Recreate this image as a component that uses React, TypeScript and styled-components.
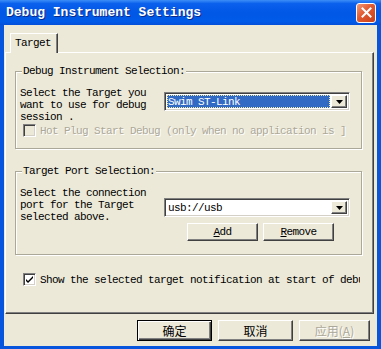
import React from 'react';
import styled, { createGlobalStyle } from 'styled-components';

const MONO = `"Liberation Mono", "DejaVu Sans Mono", monospace`;
const CJK = `"Noto Sans CJK SC", "Noto Sans", sans-serif`;
const FACE = '#ECE9D8';

const GlobalStyle = createGlobalStyle`
  html, body {
    margin: 0;
    padding: 0;
    background: #ffffff;
  }
  body {
    font-family: ${MONO};
  }
`;

const Window = styled.div`
  width: 381px;
  height: 349px;
  display: flex;
  flex-direction: column;
  background: #0855dd;
  overflow: hidden;
`;

const TitleBar = styled.div`
  height: 25px;
  flex: none;
  display: flex;
  align-items: center;
  justify-content: space-between;
  padding: 0 5px 0 6px;
  background: linear-gradient(
    to bottom,
    #3d8ef8 0%,
    #0b61ec 14%,
    #0157e6 50%,
    #015be9 86%,
    #0450d8 100%
  );
`;

const Title = styled.span`
  font-family: ${MONO};
  font-size: 13px;
  font-weight: bold;
  color: #ffffff;
  text-shadow: 1px 1px 0 #0a2a8a;
  white-space: nowrap;
`;

const CloseButton = styled.div`
  width: 20px;
  height: 20px;
  box-sizing: border-box;
  border: 1px solid #ffffff;
  border-radius: 3px;
  background: linear-gradient(135deg, #f09a7a 0%, #e1592f 45%, #c8401a 100%);
  display: flex;
  align-items: center;
  justify-content: center;
`;

const Frame = styled.div`
  flex: 1;
  min-height: 0;
  display: flex;
  padding: 0 4px 3px 4px;
`;

const Client = styled.div`
  flex: 1;
  min-width: 0;
  display: flex;
  flex-direction: column;
  background: ${FACE};
  padding: 8px 3px 5px 1px;
`;

const TabStrip = styled.div`
  display: flex;
  padding-left: 5px;
`;

const Tab = styled.div`
  position: relative;
  z-index: 1;
  height: 20px;
  box-sizing: border-box;
  margin-bottom: -1px;
  padding: 0 6px 0 4px;
  background: ${FACE};
  border-top: 1px solid #ffffff;
  border-left: 1px solid #ffffff;
  border-right: 1px solid #404040;
  box-shadow: inset -1px 0 0 #808080;
  font-size: 11px;
  letter-spacing: -0.6px;
  line-height: 18px;
  color: #000000;
`;

const TabPanel = styled.div`
  flex: 1;
  min-width: 0;
  display: flex;
  flex-direction: column;
  border-top: 1px solid #ffffff;
  border-left: 1px solid #ffffff;
  border-right: 1px solid #404040;
  border-bottom: 1px solid #404040;
  box-shadow: inset -1px -1px 0 #808080;
`;

const GroupBox = styled.fieldset<{ $top: number; $bottom: number }>`
  margin: ${(p) => p.$top}px 11px 0 9px;
  padding: 10px 10px ${(p) => p.$bottom}px 4px;
  border: 1px solid #aca899;
  box-shadow: 1px 1px 0 #ffffff, inset 1px 1px 0 #ffffff;
  min-width: 0;
`;

const Caption = styled.legend`
  margin-left: 2px;
  padding: 0 1px;
  background: ${FACE};
  font-size: 11px;
  letter-spacing: -0.6px;
  line-height: 12px;
  color: #000000;
`;

const Row = styled.div`
  display: flex;
  align-items: flex-start;
`;

const Text = styled.div`
  width: 144px;
  flex: none;
  font-size: 11px;
  letter-spacing: -0.6px;
  line-height: 12px;
  color: #000000;
`;

const Combo = styled.div<{ $top: number }>`
  width: 186px;
  height: 19px;
  box-sizing: border-box;
  margin-top: ${(p) => p.$top}px;
  display: flex;
  background: #ffffff;
  border: 1px solid;
  border-color: #808080 #ffffff #ffffff #808080;
  box-shadow: inset 1px 1px 0 #404040, inset -1px -1px 0 #d4d0c8;
  padding: 2px;
`;

const ComboValue = styled.div<{ $selected?: boolean }>`
  flex: 1;
  min-width: 0;
  margin-right: 1px;
  padding-left: 1px;
  display: flex;
  align-items: center;
  font-size: 11px;
  letter-spacing: -0.6px;
  white-space: nowrap;
  overflow: hidden;
  color: ${(p) => (p.$selected ? '#ffffff' : '#000000')};
  background: ${(p) => (p.$selected ? '#316ac5' : 'transparent')};
  outline: ${(p) => (p.$selected ? '1px dotted #f4e9a0' : 'none')};
  outline-offset: -1px;
`;

const DropButton = styled.div`
  width: 16px;
  flex: none;
  box-sizing: border-box;
  background: ${FACE};
  border: 1px solid;
  border-color: #ffffff #404040 #404040 #ffffff;
  box-shadow: inset -1px -1px 0 #808080;
  display: flex;
  align-items: center;
  justify-content: center;
`;

const CheckRow = styled.div<{ $top: number; $left: number; $right?: number }>`
  display: flex;
  align-items: center;
  height: 15px;
  min-width: 0;
  margin: ${(p) => p.$top}px ${(p) => p.$right ?? 0}px 0 ${(p) => p.$left}px;
  overflow: hidden;
`;

const CheckBox = styled.div<{ $disabled?: boolean }>`
  width: 13px;
  height: 13px;
  flex: none;
  box-sizing: border-box;
  border: 1px solid;
  border-color: #808080 #ffffff #ffffff #808080;
  box-shadow: inset 1px 1px 0 #404040, inset -1px -1px 0 #d4d0c8;
  background: ${(p) => (p.$disabled ? FACE : '#ffffff')};
  display: flex;
  align-items: center;
  justify-content: center;
`;

const CheckLabel = styled.span<{ $disabled?: boolean }>`
  flex: 1 1 auto;
  min-width: 0;
  overflow: hidden;
  margin-left: 4px;
  font-size: 11px;
  letter-spacing: -0.6px;
  line-height: 12px;
  white-space: nowrap;
  color: ${(p) => (p.$disabled ? '#aca899' : '#000000')};
  text-shadow: ${(p) => (p.$disabled ? '1px 1px 0 #ffffff' : 'none')};
`;

const ButtonRow = styled.div<{ $gap: number; $right: number; $top: number }>`
  display: flex;
  justify-content: flex-end;
  gap: ${(p) => p.$gap}px;
  margin-top: ${(p) => p.$top}px;
  padding-right: ${(p) => p.$right}px;
`;

const Button = styled.div<{ $w: number; $h: number; $default?: boolean; $disabled?: boolean; $cjk?: boolean }>`
  width: ${(p) => p.$w}px;
  height: ${(p) => p.$h}px;
  flex: none;
  box-sizing: border-box;
  display: flex;
  align-items: center;
  justify-content: center;
  background: ${FACE};
  border: 1px solid;
  border-color: ${(p) => (p.$default ? '#000000' : '#ffffff #404040 #404040 #ffffff')};
  box-shadow: ${(p) =>
    p.$default
      ? 'inset 1px 1px 0 #ffffff, inset -1px -1px 0 #404040, inset -2px -2px 0 #808080'
      : 'inset -1px -1px 0 #808080'};
  font-family: ${(p) => (p.$cjk ? CJK : MONO)};
  font-size: ${(p) => (p.$cjk ? '12px' : '11px')};
  letter-spacing: ${(p) => (p.$cjk ? '0' : '-0.6px')};
  color: ${(p) => (p.$disabled ? '#aca899' : '#000000')};
  text-shadow: ${(p) => (p.$disabled ? '1px 1px 0 #ffffff' : 'none')};
`;

const Arrow = () => (
  <svg width="7" height="4" viewBox="0 0 7 4">
    <path d="M0 0h7L3.5 4z" fill="#000" />
  </svg>
);

const Tick = () => (
  <svg width="9" height="9" viewBox="0 0 9 9">
    <path d="M1 4l2 2 5-5v2L3 8 1 6z" fill="#000" />
  </svg>
);

const App: React.FC = () => {
  return (
    <>
      <GlobalStyle />
      <Window>
        <TitleBar>
          <Title>Debug Instrument Settings</Title>
          <CloseButton>
            <svg width="11" height="11" viewBox="0 0 11 11">
              <path d="M1.5 1.5l8 8M9.5 1.5l-8 8" stroke="#fff" strokeWidth="2" strokeLinecap="square" />
            </svg>
          </CloseButton>
        </TitleBar>
        <Frame>
          <Client>
            <TabStrip>
              <Tab>Target</Tab>
            </TabStrip>
            <TabPanel>
              <GroupBox $top={12} $bottom={10}>
                <Caption>Debug Instrument Selection:</Caption>
                <Row>
                  <Text>Select the Target you want to use for debug session .</Text>
                  <Combo $top={5}>
                    <ComboValue $selected>Swim ST-Link</ComboValue>
                    <DropButton>
                      <Arrow />
                    </DropButton>
                  </Combo>
                </Row>
                <CheckRow $top={0} $left={3}>
                  <CheckBox $disabled />
                  <CheckLabel $disabled>Hot Plug Start Debug (only when no application is ]</CheckLabel>
                </CheckRow>
              </GroupBox>

              <GroupBox $top={16} $bottom={13}>
                <Caption>Target Port Selection:</Caption>
                <Row>
                  <Text>Select the connection port for the Target selected above.</Text>
                  <Combo $top={11}>
                    <ComboValue>usb://usb</ComboValue>
                    <DropButton>
                      <Arrow />
                    </DropButton>
                  </Combo>
                </Row>
                <ButtonRow $gap={5} $right={17} $top={0}>
                  <Button $w={71} $h={18}>
                    <u>A</u>dd
                  </Button>
                  <Button $w={71} $h={18}>
                    <u>R</u>emove
                  </Button>
                </ButtonRow>
              </GroupBox>

              <CheckRow $top={17} $left={17} $right={13}>
                <CheckBox>
                  <Tick />
                </CheckBox>
                <CheckLabel>Show the selected target notification at start of debug</CheckLabel>
              </CheckRow>
            </TabPanel>
            <ButtonRow $gap={6} $right={4} $top={6}>
              <Button $w={75} $h={21} $default $cjk>
                确定
              </Button>
              <Button $w={75} $h={21} $cjk>
                取消
              </Button>
              <Button $w={71} $h={21} $disabled $cjk>
                应用(<u>A</u>)
              </Button>
            </ButtonRow>
          </Client>
        </Frame>
      </Window>
    </>
  );
};

export default App;
